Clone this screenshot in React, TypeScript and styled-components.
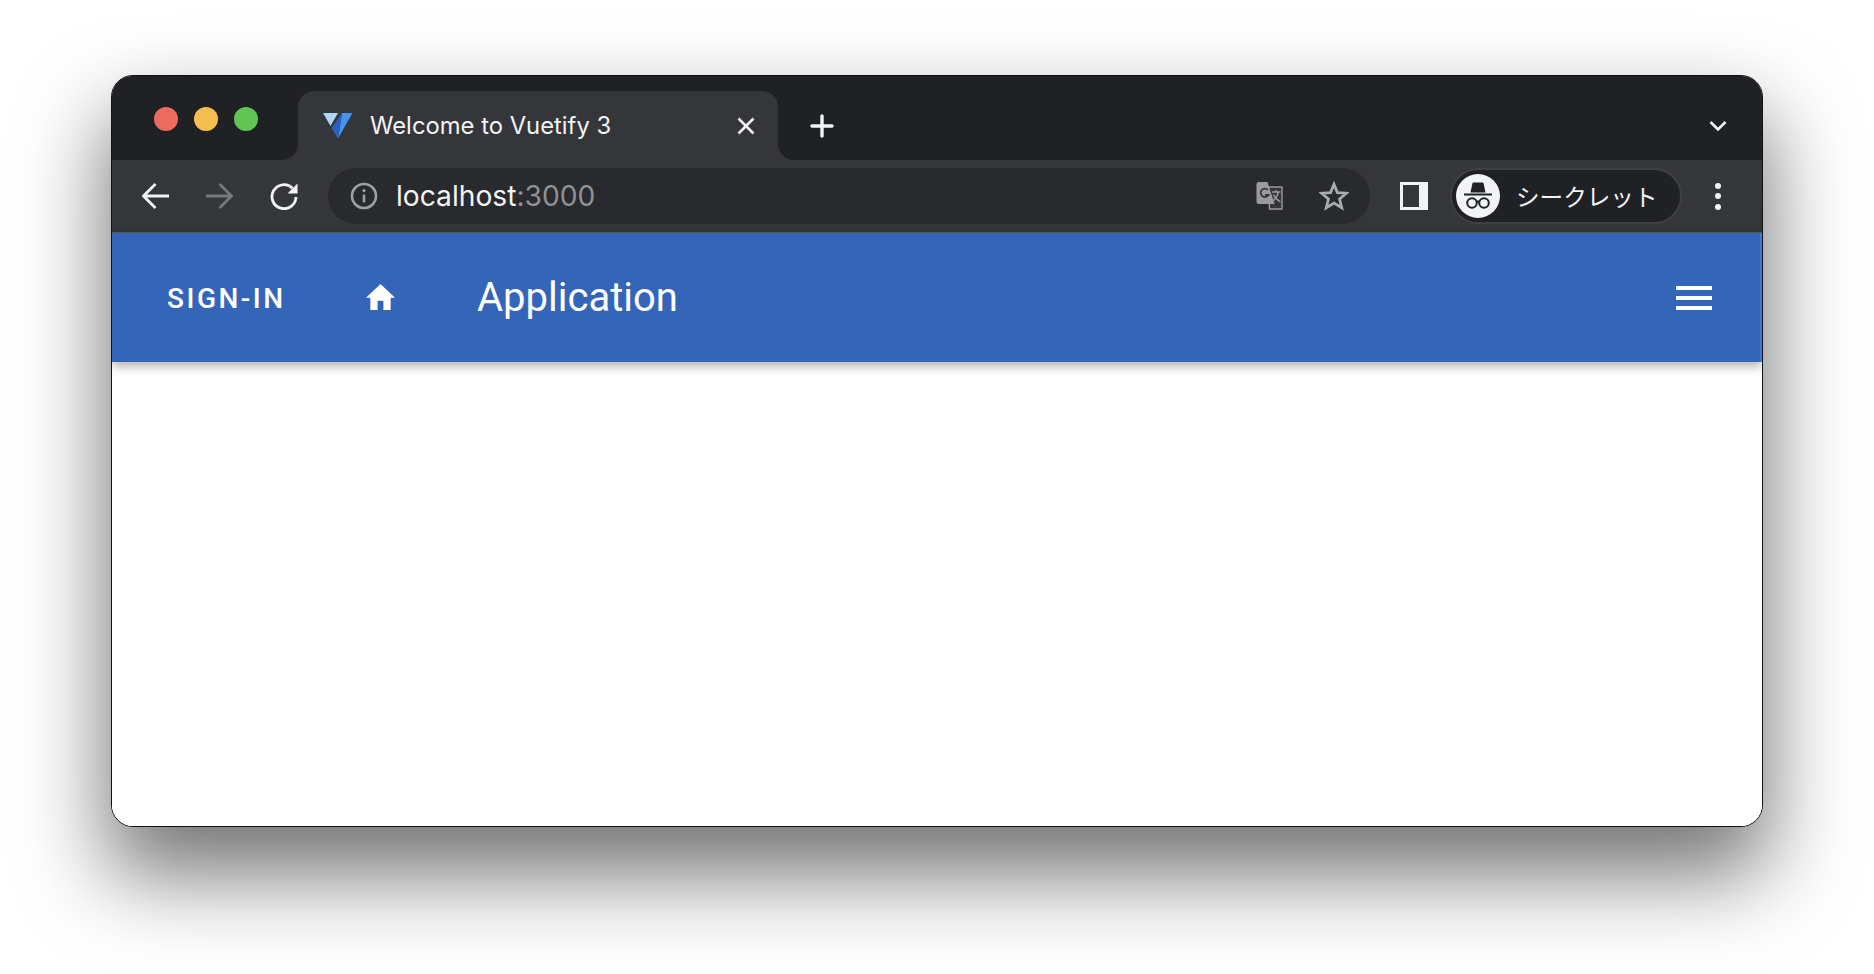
import * as React from 'react';
import styled, {createGlobalStyle} from "styled-components";

const GlobalStyle = createGlobalStyle`
  html, body {
    margin: 0;
    padding: 0;
    height: 100%;
    overflow: hidden;
    background: #ffffff;
  }
`;

const Page = styled.div`
  box-sizing: border-box;
  width: 1874px;
  height: 974px;
  padding: 75px 111px 0 111px;
  font-family: Inter, "Noto Sans CJK JP", sans-serif;
`;

const Window = styled.div`
  box-sizing: border-box;
  width: 1652px;
  height: 752px;
  display: flex;
  flex-direction: column;
  border: 1.5px solid #111214;
  border-radius: 22px;
  background: #ffffff;
  overflow: hidden;
  box-shadow: 0 44px 86px 4px rgba(0, 0, 0, 0.55);
`;

const TabStrip = styled.div`
  display: flex;
  height: 84px;
  flex: none;
  background: linear-gradient(#202124 0 50%, #35363a 50%);
`;

const LeftCap = styled.div`
  width: 186px;
  flex: none;
  display: flex;
  align-items: center;
  gap: 16px;
  padding: 1px 0 0 42px;
  box-sizing: border-box;
  background: #202124;
  border-bottom-right-radius: 16px;
`;

const Light = styled.span<{ $color: string }>`
  width: 24px;
  height: 24px;
  border-radius: 50%;
  background: ${p => p.$color};
`;

const Tab = styled.div`
  width: 480px;
  flex: none;
  margin-top: 15px;
  box-sizing: border-box;
  display: flex;
  align-items: center;
  padding: 0 20px 0 25px;
  background: #35363a;
  border-radius: 16px 16px 0 0;
`;

const TabTitle = styled.span`
  margin-left: 17px;
  flex: 1;
  font-size: 23.8px;
  color: #f1f3f4;
  white-space: nowrap;
`;

const RightArea = styled.div`
  flex: 1;
  display: flex;
  align-items: center;
  justify-content: space-between;
  padding: 15px 35px 0 32px;
  background: #202124;
  border-bottom-left-radius: 16px;
`;

const Toolbar = styled.div`
  height: 73px;
  flex: none;
  box-sizing: border-box;
  display: flex;
  align-items: center;
  padding: 0 0 0 30px;
  background: #35363a;
  border-bottom: 1.5px solid #5c5d60;
`;

const NavGroup = styled.div`
  display: flex;
  align-items: center;
  gap: 37px;
  margin-right: 30px;
`;

const AddressBar = styled.div`
  width: 1042px;
  height: 56px;
  flex: none;
  box-sizing: border-box;
  display: flex;
  align-items: center;
  padding: 0 21px 0 22px;
  border-radius: 28px;
  background: #292a2d;
`;

const Url = styled.span`
  flex: 1;
  margin-left: 18px;
  font-size: 28.2px;
  color: #f1f3f4;
`;

const Port = styled.span`
  color: #8f9194;
`;

const AddressIcons = styled.div`
  display: flex;
  align-items: center;
  gap: 35px;
`;

const SidePanel = styled.span`
  box-sizing: border-box;
  width: 28px;
  height: 28px;
  margin-left: 30px;
  margin-right: 22px;
  flex: none;
  border: solid #f1f3f4;
  border-width: 3px 9px 3px 3px;
`;

const ProfilePill = styled.div`
  box-sizing: border-box;
  width: 232px;
  height: 56px;
  flex: none;
  display: flex;
  align-items: center;
  padding-left: 4px;
  border: 2px solid #3f4044;
  border-radius: 28px;
  background: #202124;
`;

const ProfileAvatar = styled.span`
  width: 44px;
  height: 44px;
  flex: none;
  display: flex;
  align-items: center;
  justify-content: center;
  border-radius: 50%;
  background: #f1f3f4;
`;

const ProfileName = styled.span`
  margin-left: 16px;
  font-family: "Noto Sans CJK JP", sans-serif;
  font-size: 23.6px;
  color: #f1f3f4;
  white-space: nowrap;
`;

const MenuDots = styled.div`
  margin-left: 33px;
  display: flex;
  flex-direction: column;
  gap: 4.5px;
`;

const Dot = styled.span`
  width: 6px;
  height: 6px;
  border-radius: 50%;
  background: #f1f3f4;
`;

const AppBar = styled.header`
  height: 129px;
  flex: none;
  position: relative;
  z-index: 1;
  box-sizing: border-box;
  display: flex;
  align-items: center;
  padding: 0 48px 0 55px;
  background: #3465b9;
  border-right: 2px solid #4b78c4;
  box-shadow: 0 4px 10px rgba(0, 0, 0, 0.32);
  color: #ffffff;
  font-family: Roboto, sans-serif;
`;

const SignIn = styled.span`
  width: 199px;
  flex: none;
  padding-top: 2px;
  font-size: 28px;
  font-weight: 500;
  letter-spacing: 2.5px;
  white-space: nowrap;
`;

const HomeButton = styled.span`
  display: block;
  flex: none;
  margin-bottom: 2px;
`;

const AppTitle = styled.span`
  flex: 1;
  margin-left: 82px;
  font-size: 40px;
  font-weight: 400;
`;

const Hamburger = styled.div`
  display: flex;
  flex-direction: column;
  gap: 6px;
`;

const HamburgerLine = styled.span`
  width: 36px;
  height: 4px;
  background: #ffffff;
`;

const Content = styled.main`
  flex: 1;
  background: #ffffff;
`;

const Icon = styled.svg`
  display: block;
  flex: none;
`;

const VuetifyLogo = () => (
    <Icon width="30" height="26" viewBox="0 0 30 26">
        <path d="M0 0 H15 L7.5 13 Z" fill="#aed6fb"/>
        <path d="M19 0 H29.5 L15 25.5 Z" fill="#4393ef"/>
        <path d="M19 0 L8.5 15 L15 25.5 Z" fill="#2c60bd"/>
    </Icon>
);

const CloseIcon = () => (
    <Icon width="24" height="24" viewBox="0 0 24 24" fill="none" stroke="#f1f3f4" strokeWidth="2.6">
        <path d="M4.5 4.5 L19.5 19.5 M19.5 4.5 L4.5 19.5"/>
    </Icon>
);

const PlusIcon = () => (
    <Icon width="24" height="24" viewBox="0 0 24 24" fill="none" stroke="#f1f3f4" strokeWidth="3.4" strokeLinecap="round">
        <path d="M12 2 V22 M2 12 H22"/>
    </Icon>
);

const ChevronIcon = () => (
    <Icon width="18" height="12" viewBox="0 0 18 12" fill="none" stroke="#f1f3f4" strokeWidth="2.6">
        <path d="M1.5 2 L9 9.5 L16.5 2"/>
    </Icon>
);

const ArrowIcon = ({flip, color}: { flip?: boolean; color: string }) => (
    <Icon width="27" height="26" viewBox="0 0 27 26" fill="none" stroke={color} strokeWidth="2.8">
        {flip
            ? <path d="M0 13 H25 M13.5 1 L25.5 13 L13.5 25"/>
            : <path d="M27 13 H2 M13.5 1 L1.5 13 L13.5 25"/>}
    </Icon>
);

const ReloadIcon = () => (
    <Icon width="28" height="28" viewBox="0 0 28 28" fill="none">
        <path d="M22.5 6.2 A12 12 0 1 0 26 15" stroke="#f1f3f4" strokeWidth="2.8"/>
        <path d="M27.5 1.5 V11.5 H17.5 Z" fill="#f1f3f4"/>
    </Icon>
);

const InfoIcon = () => (
    <Icon width="28" height="28" viewBox="0 0 28 28" fill="none">
        <circle cx="14" cy="14" r="12" stroke="#9aa0a6" strokeWidth="2.6"/>
        <path d="M14 12.5 V20.5" stroke="#9aa0a6" strokeWidth="2.6"/>
        <circle cx="14" cy="8.6" r="1.6" fill="#9aa0a6"/>
    </Icon>
);

const TranslateIcon = () => (
    <Icon width="28" height="28" viewBox="0 0 27 28" fill="none">
        <path d="M12 5 H25.5 V27 H13 Z" fill="#35363a" stroke="#9a9b9d" strokeWidth="1.4"/>
        <path d="M0 2 Q0 0 2 0 H11 L18 22 H2 Q0 22 0 20 Z" fill="#9a9b9d"/>
        <path d="M11.5 8 A4.2 4.2 0 1 0 12 13 H8.5" stroke="#35363a" strokeWidth="1.8"/>
        <path d="M15.5 10 H24 M19.5 8 V10 M22 10 Q20 17 15.5 19.5 M17 12.5 Q19 17 24 20" stroke="#9a9b9d" strokeWidth="1.4"/>
    </Icon>
);

const StarIcon = () => (
    <Icon width="30" height="30" viewBox="0 0 28 28" fill="none">
        <path d="M14 3 L17.2 10.8 L25.6 11.4 L19.2 16.8 L21.2 25 L14 20.6 L6.8 25 L8.8 16.8 L2.4 11.4 L10.8 10.8 Z"
              stroke="#a9abad" strokeWidth="2.6" strokeLinejoin="miter"/>
    </Icon>
);

const IncognitoIcon = () => (
    <Icon width="28" height="28" viewBox="0 0 28 28" fill="none">
        <path d="M6.5 10.5 L8.4 1.6 Q8.6 0.6 9.6 0.6 H18.4 Q19.4 0.6 19.6 1.6 L21.5 10.5 Z" fill="#202124"/>
        <path d="M0 12.5 H28" stroke="#202124" strokeWidth="2"/>
        <circle cx="8" cy="21" r="4.8" stroke="#202124" strokeWidth="2"/>
        <circle cx="20" cy="21" r="4.8" stroke="#202124" strokeWidth="2"/>
        <path d="M12.5 20 Q14 19 15.5 20" stroke="#202124" strokeWidth="2"/>
    </Icon>
);

const HomeIcon = () => (
    <Icon width="29" height="26" viewBox="2 3 20 17" preserveAspectRatio="none">
        <path d="M10 20 V14 H14 V20 H19 V12 H22 L12 3 L2 12 H5 V20 Z" fill="#ffffff"/>
    </Icon>
);

export default function App() {
    return (
        <Page>
            <GlobalStyle/>
            <Window>
                <TabStrip>
                    <LeftCap>
                        <Light $color="#ed6a5e"/>
                        <Light $color="#f5bf4f"/>
                        <Light $color="#61c554"/>
                    </LeftCap>
                    <Tab>
                        <VuetifyLogo/>
                        <TabTitle>Welcome to Vuetify 3</TabTitle>
                        <CloseIcon/>
                    </Tab>
                    <RightArea>
                        <PlusIcon/>
                        <ChevronIcon/>
                    </RightArea>
                </TabStrip>
                <Toolbar>
                    <NavGroup>
                        <ArrowIcon color="#f1f3f4"/>
                        <ArrowIcon flip color="#77787a"/>
                        <ReloadIcon/>
                    </NavGroup>
                    <AddressBar>
                        <InfoIcon/>
                        <Url>localhost<Port>:3000</Port></Url>
                        <AddressIcons>
                            <TranslateIcon/>
                            <StarIcon/>
                        </AddressIcons>
                    </AddressBar>
                    <SidePanel/>
                    <ProfilePill>
                        <ProfileAvatar><IncognitoIcon/></ProfileAvatar>
                        <ProfileName>シークレット</ProfileName>
                    </ProfilePill>
                    <MenuDots>
                        <Dot/>
                        <Dot/>
                        <Dot/>
                    </MenuDots>
                </Toolbar>
                <AppBar>
                    <SignIn>SIGN-IN</SignIn>
                    <HomeButton><HomeIcon/></HomeButton>
                    <AppTitle>Application</AppTitle>
                    <Hamburger>
                        <HamburgerLine/>
                        <HamburgerLine/>
                        <HamburgerLine/>
                    </Hamburger>
                </AppBar>
                <Content/>
            </Window>
        </Page>
    );
}
